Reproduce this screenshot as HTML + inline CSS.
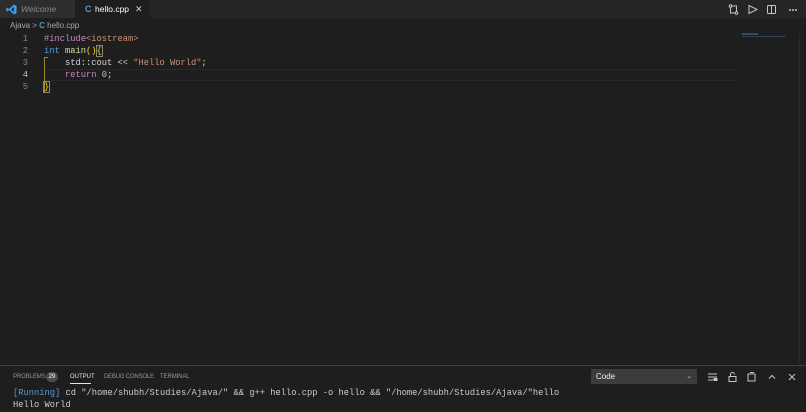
<!DOCTYPE html>
<html><head><meta charset="utf-8"><style>
*{margin:0;padding:0;box-sizing:border-box}
body{width:806px;height:412px;background:#1e1e1e;font-family:"Liberation Sans",sans-serif;overflow:hidden;position:relative;color:#ccc}
.abs{position:absolute}
.tabs{left:0;top:0;width:806px;height:18px;background:#252526}
.tab{top:0;height:18px;font-size:8.5px;line-height:18px}
.mono{font-family:"Liberation Mono",monospace;font-size:8.75px;white-space:pre}
.ln{width:28px;text-align:right;color:#858585}
.k{color:#569cd6}.s{color:#ce9178}.f{color:#dcdcaa}.p{color:#d4d4d4}.y{color:#ffd700}.n{color:#b5cea8}.c{color:#c586c0}
</style></head><body>
<div class="abs tabs"></div>
<div class="abs tab" style="left:0;width:75px;background:#2d2d2d;color:#888;font-style:italic">
<svg class="abs" style="left:6px;top:4px" width="11" height="11" viewBox="0 0 11 11"><path d="M8 0.5L10.5 1.7V9.3L8 10.5L3 6L1 7.5L0.3 7V4L1 3.5L3 5L8 0.5ZM8 3L5 5.5L8 8Z" fill="#3b9ee8"/></svg>
<span class="abs" style="left:21px">Welcome</span></div>
<div class="abs tab" style="left:75px;width:75px;background:#1e1e1e;color:#fff">
<span class="abs" style="left:10px;color:#519aba;font-weight:bold;font-size:9px">C</span>
<span class="abs" style="left:20px">hello.cpp</span>
<span class="abs" style="left:60px;font-size:9px;color:#ccc">✕</span></div>
<svg class="abs" style="left:728px;top:4px" width="72" height="11" viewBox="0 0 72 11" fill="none" stroke="#c5c5c5" stroke-width="1">
<circle cx="2.5" cy="2" r="1.3"/><circle cx="8.5" cy="9" r="1.3"/><path d="M2.5 3.5V9H7M8.5 7.5V2H4"/>
<path d="M21 1.5L29 5.5L21 9.5Z"/>
<rect x="39.5" y="1.5" width="8" height="8" rx="1"/><path d="M43.5 1.5V9.5"/>
<circle cx="62" cy="6" r=".5" fill="#c5c5c5"/><circle cx="65" cy="6" r=".5" fill="#c5c5c5"/><circle cx="68" cy="6" r=".5" fill="#c5c5c5"/></svg>
<div class="abs" style="left:10px;top:21px;font-size:8px;color:#a9a9a9">Ajava &gt; <span style="color:#519aba;font-weight:bold">C</span> hello.cpp</div>
<div class="abs" style="left:44px;top:69px;width:694px;height:12px;border-top:1px solid #282828;border-bottom:1px solid #282828"></div>
<div class="abs" style="left:44px;top:57px;width:1px;height:36px;background:#9a8a2a"></div>
<div class="abs" style="left:44px;top:57px;width:4px;height:1px;background:#9a8a2a"></div>
<div class="abs mono ln" style="left:0;top:33px;line-height:12px">1
2
3
<span style="color:#c6c6c6">4</span>
5</div>
<div class="abs mono" style="left:44px;top:33px;line-height:12px"><span class="c">#include</span><span class="s">&lt;iostream&gt;</span>
<span class="k">int</span> <span class="f">main</span><span class="y">()</span><span class="y" style="outline:1px solid #888">{</span>
<span class="p">    std::cout &lt;&lt; </span><span class="s">"Hello World"</span><span class="p">;</span>
<span class="p">    </span><span class="c">return</span> <span class="n">0</span><span class="p">;</span>
<span class="y" style="outline:1px solid #888">}</span></div>
<div class="abs" style="left:742px;top:33px;width:16px;height:2px;background:#3a4a5a"></div>
<div class="abs" style="left:742px;top:36px;width:44px;height:1px;background:#2e3d55"></div>
<div class="abs" style="left:799px;top:33px;width:1px;height:330px;background:#2a2a2a"></div>
<div class="abs" style="left:0;top:365px;width:806px;height:1px;background:#414141"></div>
<div class="abs" style="left:13px;top:374px;font-size:6px;color:#969696;letter-spacing:-0.1px">PROBLEMS</div>
<div class="abs" style="left:46px;top:372px;width:12px;height:10px;border-radius:5px;background:#4d4d4d;font-size:6px;color:#fff;text-align:center;line-height:10px">29</div>
<div class="abs" style="left:70px;top:374px;font-size:6px;color:#e7e7e7">OUTPUT</div>
<div class="abs" style="left:70px;top:383px;width:21px;height:1px;background:#e7e7e7"></div>
<div class="abs" style="left:104px;top:374px;font-size:6px;color:#969696;letter-spacing:-0.2px">DEBUG CONSOLE</div>
<div class="abs" style="left:160px;top:374px;font-size:6px;color:#969696;letter-spacing:-0.1px">TERMINAL</div>
<div class="abs" style="left:591px;top:369px;width:106px;height:15px;background:#3c3c3c;font-size:8px;line-height:15px;padding-left:5px;color:#f0f0f0">Code<span class="abs" style="right:5px;top:0;font-size:7px;color:#bbb">⌄</span></div>
<svg class="abs" style="left:707px;top:371px" width="94" height="12" viewBox="0 0 94 12" fill="none" stroke="#c5c5c5" stroke-width="1">
<path d="M1 3H10M1 6H10M1 9H6"/><rect x="7" y="7.5" width="3" height="2" fill="#c5c5c5"/>
<rect x="22" y="5.5" width="7" height="5"/><path d="M23.5 5.5V3.5A2 2 0 0 1 27.5 3.5"/>
<path d="M41 3H48V10H41Z M43 1.5H47"/>
<path d="M62 7.5L65 4.5L68 7.5"/>
<path d="M82 3L88 9M88 3L82 9"/></svg>
<div class="abs mono" style="left:13px;top:387px;line-height:12px;color:#ccc;font-size:8.75px"><span style="color:#569cd6">[Running]</span> cd "/home/shubh/Studies/Ajava/" &amp;&amp; g++ hello.cpp -o hello &amp;&amp; "/home/shubh/Studies/Ajava/"hello
Hello World</div>
</body></html>
